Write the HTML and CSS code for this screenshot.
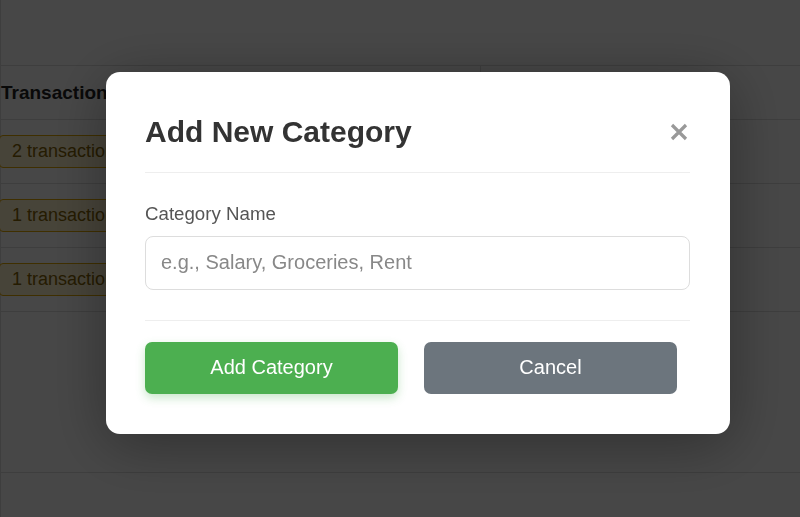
FILE: index.html
```html
<!DOCTYPE html>
<html lang="en">
<head>
<meta charset="utf-8">
<title>Add New Category</title>
<link rel="stylesheet" href="styles.css">
</head>
<body>
<div class="page">
  <div class="page-top"></div>
  <div class="table">
    <div class="row head">
      <div class="cell c1">Transactions</div>
      <div class="cell c2"></div>
    </div>
    <div class="row">
      <div class="cell c1"><span class="badge">2 transactions</span></div>
      <div class="cell c2"></div>
    </div>
    <div class="row">
      <div class="cell c1"><span class="badge">1 transaction</span></div>
      <div class="cell c2"></div>
    </div>
    <div class="row">
      <div class="cell c1"><span class="badge">1 transaction</span></div>
      <div class="cell c2"></div>
    </div>
  </div>
  <div class="page-bottom"></div>
</div>

<div class="overlay">
  <div class="modal">
    <div class="modal-header">
      <h2 class="modal-title">Add New Category</h2>
      <button class="close" aria-label="Close">
        <svg width="18" height="18" viewBox="0 0 18 18"><path d="M2 2 L16 16 M16 2 L2 16" stroke="#999" stroke-width="3.2" stroke-linecap="butt"/></svg>
      </button>
    </div>
    <div class="modal-body">
      <label class="label" for="cat">Category Name</label>
      <input class="input" id="cat" type="text" placeholder="e.g., Salary, Groceries, Rent">
    </div>
    <div class="modal-footer">
      <button class="btn btn-primary">Add Category</button>
      <button class="btn btn-secondary">Cancel</button>
    </div>
  </div>
</div>
</body>
</html>
```

FILE: styles.css
```css
* { box-sizing: border-box; }
html, body { margin: 0; padding: 0; }
body {
  font-family: "Liberation Sans", Arial, sans-serif;
  background: #fff;
  color: #333;
  width: 800px;
  height: 517px;
  overflow: hidden;
}
.page {
  border-left: 1px solid #ddd;
  height: 517px;
}
.page-top {
  height: 66px;
  border-bottom: 1px solid #ddd;
}
.table { display: flex; flex-direction: column; }
.row {
  display: flex;
  height: 64px;
  border-bottom: 1px solid #ddd;
}
.row.head { height: 54px; }
.cell { display: flex; align-items: center; }
.c1 { width: 480px; padding-left: 0; border-right: 1px solid #ddd; }
.head .c1 { font-weight: bold; font-size: 19px; color: #222; }
.c2 { flex: 1; }
.row:not(.head) .c1 { border-right: none; }
.badge {
  display: inline-block;
  margin-left: -2px;
  background: #fff3cd;
  color: #856404;
  border: 1px solid #e0a800;
  border-radius: 4px;
  font-size: 18px;
  padding: 6px 12px;
  line-height: 19px;
  white-space: nowrap;
}
.page-bottom {
  height: 161px;
  border-bottom: 1px solid #ddd;
}

.overlay {
  position: fixed;
  inset: 0;
  background-color: rgba(0, 0, 0, 0.72);
  display: flex;
  align-items: flex-start;
  padding: 72px 0 0 106px;
}
.modal {
  width: 624px;
  background: #fff;
  border-radius: 14px;
  padding: 40px 40px 40px 39px;
  box-shadow: 0 10px 60px rgba(0, 0, 0, 0.35);
}
.modal-header {
  display: flex;
  align-items: center;
  justify-content: space-between;
  padding-top: 3px;
  padding-bottom: 22px;
  border-bottom: 1px solid #eee;
}
.modal-title {
  margin: 0;
  font-size: 30px;
  font-weight: bold;
  color: #333;
  line-height: 34.5px;
}
.close {
  border: none;
  background: none;
  padding: 0;
  margin: 0 2px 0 0;
  width: 18px;
  height: 18px;
  display: flex;
}
.modal-body { padding: 30px 0 30px; }
.label {
  display: block;
  font-size: 18.7px;
  color: #555;
  margin-bottom: 11px;
}
.input {
  display: block;
  width: 100%;
  height: 54px;
  padding: 0 15px;
  font-family: inherit;
  font-size: 20px;
  border: 1px solid #ddd;
  border-radius: 8px;
  color: #333;
}
.input::placeholder { color: #888; }
.modal-footer {
  display: flex;
  gap: 26px;
  border-top: 1px solid #eee;
  padding-top: 21px;
}
.btn {
  width: 253px;
  height: 52px;
  border: none;
  border-radius: 7px;
  font-family: inherit;
  font-size: 20px;
  color: #fff;
}
.btn-primary {
  background: #4caf50;
  box-shadow: 0 4px 10px rgba(76, 175, 80, 0.3);
}
.btn-secondary { background: #6c757d; }
```
